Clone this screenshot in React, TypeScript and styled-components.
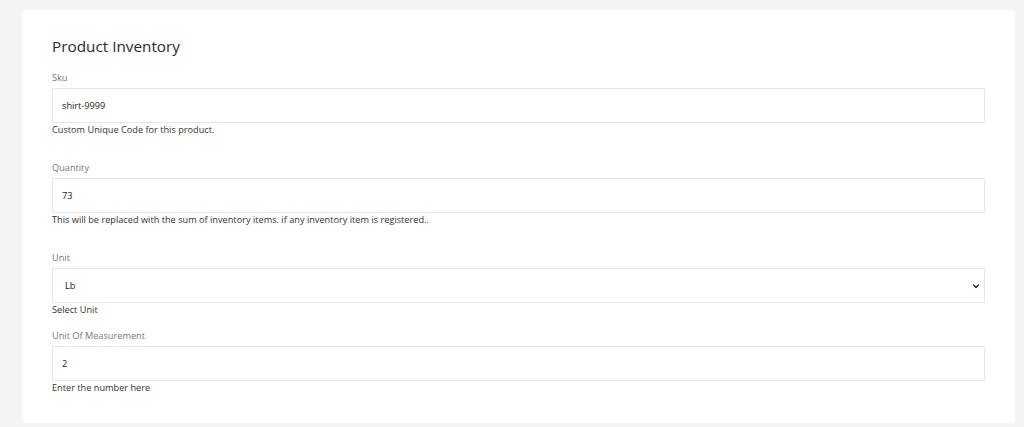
import * as React from 'react'
import styled, { createGlobalStyle } from 'styled-components'

const GlobalStyle = createGlobalStyle`
    html, body {
        margin: 0;
        padding: 0;
        background: #f4f4f4;
    }
    body {
        font-family: 'Open Sans', 'Noto Sans', sans-serif;
        color: #333;
    }
`

const Page = styled.div`
    padding: 10px 9px 5px 22px;
    min-height: 427px;
    box-sizing: border-box;
`

const Card = styled.div`
    background: #fff;
    border-radius: 4px;
    padding: 26px 30px 28px 30px;
`

const Title = styled.h2`
    margin: 0 0 15px 0;
    font-size: 15.3px;
    line-height: 20px;
    font-weight: 500;
    color: #2b2b2b;
`

const Group = styled.div<{ $gap: number }>`
    display: flex;
    flex-direction: column;
    margin-bottom: ${p => p.$gap}px;
`

const Label = styled.label`
    font-size: 9.2px;
    line-height: 14px;
    color: #777;
    margin-bottom: 3px;
`

const Input = styled.input`
    box-sizing: border-box;
    height: 35px;
    width: 100%;
    border: 1px solid #e6e6e6;
    border-radius: 1px;
    padding: 0 9px;
    font-family: inherit;
    font-size: 9.2px;
    color: #222;
    outline: none;
    background: #fff;
`

const SelectWrap = styled.div`
    position: relative;
`

const Select = styled.select`
    box-sizing: border-box;
    appearance: none;
    height: 35px;
    width: 100%;
    border: 1px solid #e6e6e6;
    border-radius: 1px;
    padding: 0 12px;
    font-family: inherit;
    font-size: 9.2px;
    color: #222;
    background: #fff;
    outline: none;
`

const Chevron = styled.svg`
    position: absolute;
    right: 5px;
    top: 50%;
    width: 8px;
    height: 8px;
    transform: translateY(-50%);
    pointer-events: none;
`

const Help = styled.div`
    font-size: 9.2px;
    line-height: 14px;
    color: #333;
`

export default function App() {
    return (
        <>
            <GlobalStyle />
            <Page>
                <Card>
                    <Title>Product Inventory</Title>
                    <Group $gap={24}>
                        <Label>Sku</Label>
                        <Input defaultValue="shirt-9999" />
                        <Help>Custom Unique Code for this product.</Help>
                    </Group>
                    <Group $gap={24}>
                        <Label>Quantity</Label>
                        <Input defaultValue="73" />
                        <Help>This will be replaced with the sum of inventory items. if any inventory item is registered..</Help>
                    </Group>
                    <Group $gap={12}>
                        <Label>Unit</Label>
                        <SelectWrap>
                            <Select defaultValue="Lb">
                                <option>Lb</option>
                                <option>Kg</option>
                            </Select>
                            <Chevron viewBox="0 0 16 16">
                                <path d="M3 6l5 5 5-5" fill="none" stroke="#222" strokeWidth="2.4" strokeLinecap="round" strokeLinejoin="round" />
                            </Chevron>
                        </SelectWrap>
                        <Help>Select Unit</Help>
                    </Group>
                    <Group $gap={0}>
                        <Label>Unit Of Measurement</Label>
                        <Input defaultValue="2" />
                        <Help>Enter the number here</Help>
                    </Group>
                </Card>
            </Page>
        </>
    )
}
